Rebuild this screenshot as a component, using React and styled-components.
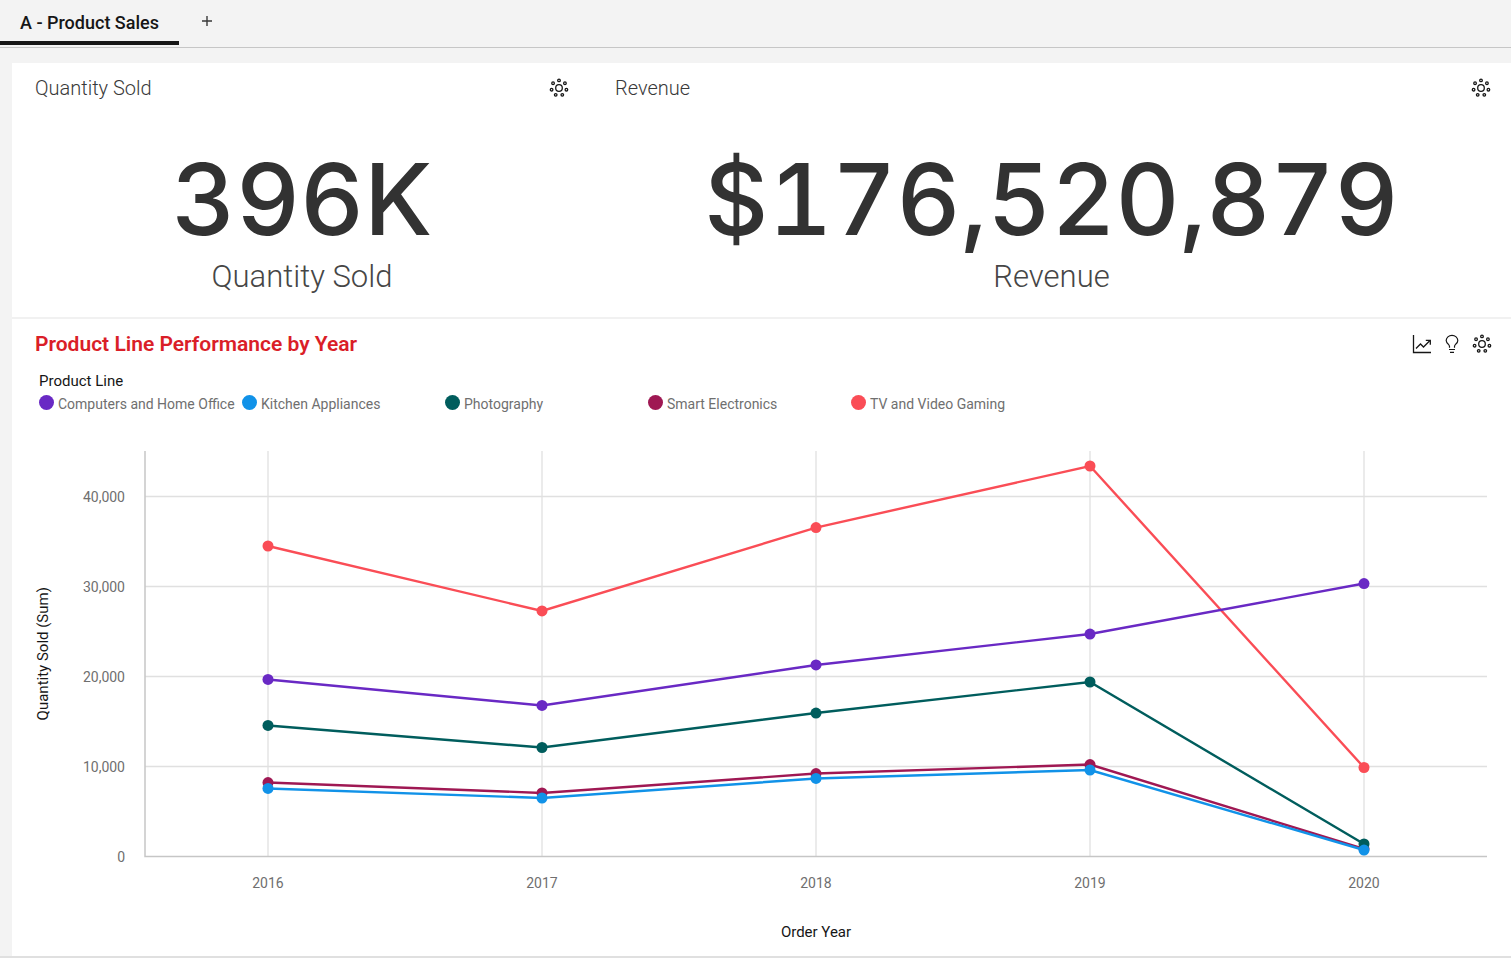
import React, { useLayoutEffect, useRef, useState } from "react";
import styled, { createGlobalStyle } from "styled-components";

const GlobalStyle = createGlobalStyle`
  *, *::before, *::after { box-sizing: border-box; }
  body {
    margin: 0;
    background: #f3f3f3;
    color: #161616;
    font-family: Roboto, "Noto Sans", sans-serif;
  }
`;

const Page = styled.div`
  display: flex;
  flex-direction: column;
  min-height: 100vh;
  border-bottom: 2px solid #e0e0e0;
`;

const TabBar = styled.div`
  display: flex;
  align-items: flex-start;
  height: 48px;
  border-bottom: 1px solid #c6c6c6;
`;

const Tab = styled.button`
  height: 45px;
  padding: 4px 20px 0;
  border: 0;
  border-bottom: 4px solid #161616;
  background: transparent;
  color: #161616;
  font: 500 18px/24px Roboto, sans-serif;
`;

const AddTab = styled.button`
  display: flex;
  align-items: center;
  justify-content: center;
  width: 56px;
  height: 42px;
  padding: 0;
  border: 0;
  background: transparent;
`;

const Board = styled.main`
  display: flex;
  flex-direction: column;
  flex: 1;
  margin: 15px 0 0 12px;
  background: #ffffff;
`;

const KpiRow = styled.div`
  display: grid;
  grid-template-columns: 580fr 919fr;
  border-bottom: 2px solid #f1f1f1;
`;

const Card = styled.section`
  display: flex;
  flex-direction: column;
  min-width: 0;
`;

const CardHeader = styled.header`
  display: flex;
  align-items: center;
  justify-content: space-between;
  height: 50px;
  padding: 0 ${(p) => p.$end ?? 18}px 0 23px;
`;

const CardTitle = styled.h2`
  margin: 0;
  color: #393939;
  font: 300 20px/28px Roboto, sans-serif;
`;

const ChartTitle = styled(CardTitle)`
  color: #da1e28;
  font-size: 21px;
  font-weight: 600;
`;

const Actions = styled.div`
  display: flex;
  gap: 8px;
`;

const IconButton = styled.button`
  display: flex;
  align-items: center;
  justify-content: center;
  width: 22px;
  height: 22px;
  padding: 0;
  border: 0;
  background: transparent;
  color: #161616;
`;

const KpiBody = styled.div`
  display: flex;
  flex-direction: column;
  align-items: center;
  padding: 26px 0 22px;
`;

const KpiValue = styled.div`
  color: #323232;
  font: 500 99px/120px Inter, sans-serif;
  font-variant-numeric: tabular-nums;
`;

const KpiLabel = styled.div`
  color: #464646;
  font: 300 31px/36px Roboto, sans-serif;
`;

const LegendTitle = styled.h3`
  margin: 0;
  padding-left: 27px;
  color: #161616;
  font: 400 15px/24px Roboto, sans-serif;
`;

const LegendList = styled.ul`
  display: flex;
  flex-wrap: wrap;
  margin: 0;
  padding: 0 0 0 27px;
  list-style: none;
`;

const LegendItem = styled.li`
  display: flex;
  align-items: center;
  gap: 4px;
  width: 203px;
  color: #6f6f6f;
  font: 400 14px/22px Roboto, sans-serif;
  white-space: nowrap;

  &::before {
    content: "";
    width: 15px;
    height: 15px;
    margin-bottom: 3px;
    border-radius: 50%;
    background: ${(p) => p.$color};
  }
`;

const ChartArea = styled.div`
  width: 100%;
  overflow: hidden;
`;

const ChartSvg = styled.svg`
  display: block;
  font-family: Roboto, sans-serif;
`;

const TickText = styled.text`
  fill: #6f6f6f;
  font-size: 14px;
`;

const AxisText = styled.text`
  fill: #161616;
  font-size: 15px;
  text-anchor: middle;
`;

const YEARS = ["2016", "2017", "2018", "2019", "2020"];

const SERIES = [
  { name: "Computers and Home Office", color: "#6929c4", values: [19670, 16780, 21280, 24720, 30330] },
  { name: "Kitchen Appliances", color: "#1192e8", values: [7560, 6500, 8670, 9610, 720] },
  { name: "Photography", color: "#005d5d", values: [14560, 12110, 15940, 19390, 1390] },
  { name: "Smart Electronics", color: "#9f1853", values: [8220, 7060, 9220, 10220, 850] },
  { name: "TV and Video Gaming", color: "#fa4d56", values: [34500, 27280, 36550, 43390, 9890] },
];

const Y_TICKS = [0, 10000, 20000, 30000, 40000];

function InsightsIcon() {
  const dots = Array.from({ length: 7 }, (_, i) => {
    const a = (i * 2 * Math.PI) / 7 - Math.PI / 2;
    return [11 + 7.6 * Math.cos(a), 11 + 7.6 * Math.sin(a)];
  });
  return (
    <svg width="22" height="22" viewBox="0 0 22 22" fill="none" stroke="currentColor" strokeWidth="1.3">
      <circle cx="11" cy="11" r="3.3" />
      {dots.map(([x, y], i) => (
        <circle key={i} cx={x} cy={y} r="1.3" />
      ))}
    </svg>
  );
}

function TrendIcon() {
  return (
    <svg width="22" height="22" viewBox="0 0 22 22" fill="none" stroke="currentColor" strokeWidth="1.3">
      <path d="M2.5 2v17.5H20" />
      <path d="M5 15.500l4.500-4.500 3 3 6.500-6.500" />
      <path d="M14.800 7.300h4.500v4.500" />
    </svg>
  );
}

function BulbIcon() {
  return (
    <svg width="22" height="22" viewBox="0 0 22 22" fill="none" stroke="currentColor" strokeWidth="1.2">
      <path d="M8.500 14.800v-1.300c0-1.200-.6-1.700-1.400-2.500A5.600 5.600 0 0 1 5.200 7.600a5.800 5.200 0 0 1 11.600 0c0 1.500-.8 2.500-1.900 3.400-.8.800-1.400 1.300-1.400 2.500v1.300" />
      <path d="M8 16.500h6M9 19.300h4" />
    </svg>
  );
}

function Insights() {
  return (
    <IconButton aria-label="Insights">
      <InsightsIcon />
    </IconButton>
  );
}

function Kpi({ title, value, end }) {
  return (
    <Card>
      <CardHeader $end={end}>
        <CardTitle>{title}</CardTitle>
        <Insights />
      </CardHeader>
      <KpiBody>
        <KpiValue>{value}</KpiValue>
        <KpiLabel>{title}</KpiLabel>
      </KpiBody>
    </Card>
  );
}

function LineChart() {
  const ref = useRef(null);
  const [width, setWidth] = useState(0);

  useLayoutEffect(() => {
    const measure = () => setWidth(ref.current.clientWidth);
    measure();
    const observer = new ResizeObserver(measure);
    observer.observe(ref.current);
    return () => observer.disconnect();
  }, []);

  const left = 133;
  const right = Math.max(width - 24, left + 100);
  const top = 36;
  const bottom = 441.5;
  const step = (right - left) / 4.9;
  const x = (i) => Math.round(left + step * (0.45 + i));
  const y = (v) => bottom - (v / 10000) * 90;

  return (
    <ChartArea ref={ref}>
      <ChartSvg width={width} height="540" role="img" aria-label="Quantity sold by order year and product line">
        <g stroke="#e0e0e0" strokeWidth="1.3">
          {Y_TICKS.slice(1).map((t) => (
            <line key={t} x1={left} x2={right} y1={y(t)} y2={y(t)} />
          ))}
          {YEARS.map((year, i) => (
            <line key={year} x1={x(i)} x2={x(i)} y1={top} y2={bottom} />
          ))}
        </g>
        <path d={`M${left} ${top}V${bottom}H${right}`} fill="none" stroke="#c6c6c6" strokeWidth="1.5" />
        {[...SERIES].reverse().map((s) => (
          <g key={s.name} fill={s.color}>
            <polyline
              points={s.values.map((v, i) => `${x(i)},${y(v)}`).join(" ")}
              fill="none"
              stroke={s.color}
              strokeWidth="2.4"
            />
            {s.values.map((v, i) => (
              <circle key={i} cx={x(i)} cy={y(v)} r="5.5" />
            ))}
          </g>
        ))}
        {Y_TICKS.map((t) => (
          <TickText key={t} x={left - 20} y={y(t) + 5} textAnchor="end">
            {t.toLocaleString("en-US")}
          </TickText>
        ))}
        {YEARS.map((year, i) => (
          <TickText key={year} x={x(i)} y={bottom + 31} textAnchor="middle">
            {year}
          </TickText>
        ))}
        <AxisText x={(left + right) / 2} y={bottom + 80}>Order Year</AxisText>
        <AxisText transform={`translate(36 ${(top + bottom) / 2}) rotate(-90)`}>Quantity Sold (Sum)</AxisText>
      </ChartSvg>
    </ChartArea>
  );
}

export default function App() {
  return (
    <>
      <GlobalStyle />
      <Page>
        <TabBar role="tablist">
          <Tab role="tab" aria-selected="true">A - Product Sales</Tab>
          <AddTab aria-label="Add tab">
            <svg width="12" height="12" viewBox="0 0 12 12" stroke="#393939" strokeWidth="1.4">
              <path d="M6 1v10M1 6h10" />
            </svg>
          </AddTab>
        </TabBar>
        <Board>
          <KpiRow>
            <Kpi title="Quantity Sold" value="396K" end={22} />
            <Kpi title="Revenue" value="$176,520,879" end={19} />
          </KpiRow>
          <Card>
            <CardHeader>
              <ChartTitle>Product Line Performance by Year</ChartTitle>
              <Actions>
                <IconButton aria-label="Visualization"><TrendIcon /></IconButton>
                <IconButton aria-label="Suggestions"><BulbIcon /></IconButton>
                <Insights />
              </Actions>
            </CardHeader>
            <LegendTitle>Product Line</LegendTitle>
            <LegendList>
              {SERIES.map((s) => (
                <LegendItem key={s.name} $color={s.color}>{s.name}</LegendItem>
              ))}
            </LegendList>
            <LineChart />
          </Card>
        </Board>
      </Page>
    </>
  );
}
